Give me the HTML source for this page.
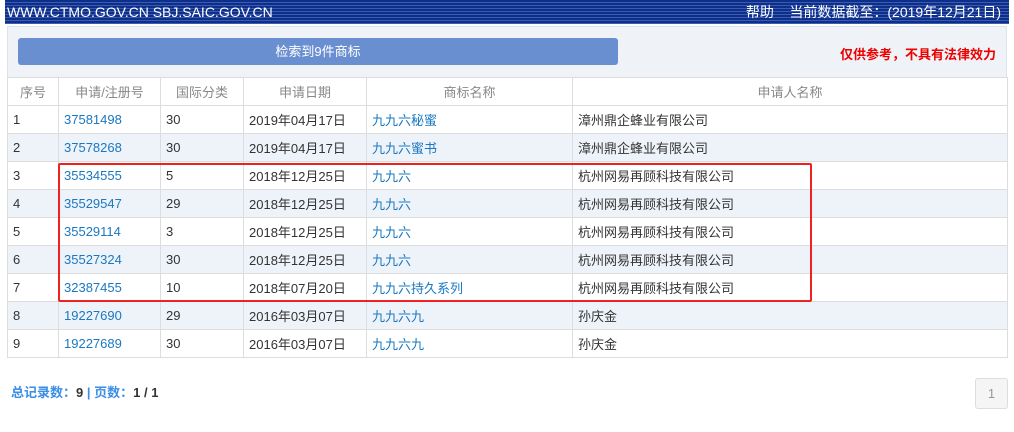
<!DOCTYPE html>
<html><head><meta charset="utf-8"><style>
body{margin:0;width:1014px;height:432px;background:#fff;font-family:"Liberation Sans","Noto Sans CJK SC",sans-serif;font-size:13px;color:#333;position:relative;overflow:hidden}
.hdr{position:absolute;left:5px;top:0;width:1004px;height:24px;background:repeating-linear-gradient(180deg,#0d2f8a 0,#0d2f8a 2px,#3a5bb0 2px,#3a5bb0 3px);color:#fff;font-size:14px;line-height:25px}
.panel{position:absolute;left:7px;top:26px;width:1000px;height:51px;background:#eff3f7;border:1px solid #dde3ea;border-bottom:none;box-sizing:border-box}
.btn{position:absolute;left:10px;top:11px;width:600px;height:27px;background:#6a8fd1;border-radius:3px;color:#fff;text-align:center;line-height:27px;font-size:13px}
.warn{position:absolute;right:10px;top:17px;color:#e00;font-weight:bold;font-size:13px}
table{position:absolute;left:7px;top:77px;border-collapse:collapse;width:1001px;table-layout:fixed}
td,th{border:1px solid #ddd;height:27px;padding:0 5px;text-align:left;font-weight:normal;white-space:nowrap;overflow:hidden}
th{text-align:center;color:#888;background:#fff;height:27px}
tr:nth-child(odd) td{background:#eef3f9}
a{color:#1a78c2;text-decoration:none}
.box{position:absolute;left:58px;top:163px;width:750px;height:135px;border:2px solid #e22;border-radius:2px}
.foot{position:absolute;left:11px;top:382px;color:#3a8ee6;font-size:13px;font-weight:bold}
.foot b{color:#333}
.pg{position:absolute;left:975px;top:378px;width:31px;height:29px;border:1px solid #ddd;border-radius:3px;background:#f5f5f5;color:#999;text-align:center;line-height:29px}
</style></head><body>
<div class="hdr"><span style="margin-left:2px">WWW.CTMO.GOV.CN SBJ.SAIC.GOV.CN</span><span style="position:absolute;right:8px">帮助&nbsp;&nbsp;&nbsp;&nbsp;当前数据截至：(2019年12月21日)</span></div>
<div class="panel"><div class="btn">检索到9件商标</div><div class="warn">仅供参考，不具有法律效力</div></div>
<table>
<colgroup><col style="width:51px"><col style="width:102px"><col style="width:83px"><col style="width:123px"><col style="width:206px"><col></colgroup>
<tr><th>序号</th><th>申请/注册号</th><th>国际分类</th><th>申请日期</th><th>商标名称</th><th>申请人名称</th></tr>
<tr><td>1</td><td><a>37581498</a></td><td>30</td><td>2019年04月17日</td><td><a>九九六秘蜜</a></td><td>漳州鼎企蜂业有限公司</td></tr>
<tr><td>2</td><td><a>37578268</a></td><td>30</td><td>2019年04月17日</td><td><a>九九六蜜书</a></td><td>漳州鼎企蜂业有限公司</td></tr>
<tr><td>3</td><td><a>35534555</a></td><td>5</td><td>2018年12月25日</td><td><a>九九六</a></td><td>杭州网易再顾科技有限公司</td></tr>
<tr><td>4</td><td><a>35529547</a></td><td>29</td><td>2018年12月25日</td><td><a>九九六</a></td><td>杭州网易再顾科技有限公司</td></tr>
<tr><td>5</td><td><a>35529114</a></td><td>3</td><td>2018年12月25日</td><td><a>九九六</a></td><td>杭州网易再顾科技有限公司</td></tr>
<tr><td>6</td><td><a>35527324</a></td><td>30</td><td>2018年12月25日</td><td><a>九九六</a></td><td>杭州网易再顾科技有限公司</td></tr>
<tr><td>7</td><td><a>32387455</a></td><td>10</td><td>2018年07月20日</td><td><a>九九六持久系列</a></td><td>杭州网易再顾科技有限公司</td></tr>
<tr><td>8</td><td><a>19227690</a></td><td>29</td><td>2016年03月07日</td><td><a>九九六九</a></td><td>孙庆金</td></tr>
<tr><td>9</td><td><a>19227689</a></td><td>30</td><td>2016年03月07日</td><td><a>九九六九</a></td><td>孙庆金</td></tr>
</table>
<div class="box"></div>
<div class="foot">总记录数：<b>9</b> | 页数：<b>1 / 1</b></div>
<div class="pg">1</div>
</body></html>
